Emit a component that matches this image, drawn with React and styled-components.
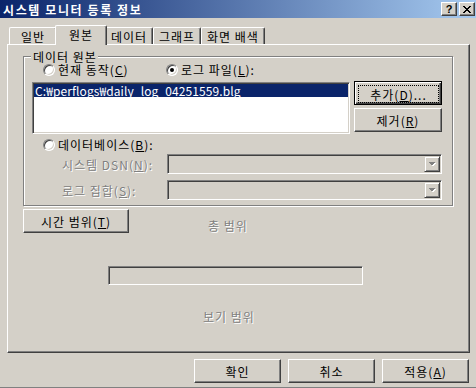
import React from "react";
import styled, { createGlobalStyle, css } from "styled-components";

const face = "#d4d0c8";
const shadow = "#808080";
const dark = "#404040";

const GlobalStyle = createGlobalStyle`
  html, body {
    margin: 0;
    padding: 0;
    background: ${face};
  }
  body {
    font-family: "Noto Sans CJK KR", "Noto Sans", sans-serif;
    font-size: 12px;
  }
  * {
    box-sizing: border-box;
  }
`;

const Window = styled.div`
  width: 476px;
  height: 388px;
  background: ${face};
  border-bottom: 1px solid ${shadow};
  display: flex;
  flex-direction: column;
  overflow: hidden;
  color: #000;
  font-size: 12px;
  line-height: 13px;
  letter-spacing: 1px;
`;

const TitleBar = styled.div`
  height: 18px;
  flex: none;
  display: flex;
  align-items: center;
  padding: 0 1px 0 3px;
  background: linear-gradient(to right, #0a246a, #a6caf0);
  color: #fff;
  font-weight: bold;
`;

const Title = styled.span`
  flex: 1;
  white-space: nowrap;
  letter-spacing: 1.6px;
`;

const CaptionButton = styled.div`
  width: 16px;
  height: 14px;
  margin-left: 2px;
  background: ${face};
  border: 1px solid;
  border-color: #fff ${dark} ${dark} #fff;
  box-shadow: inset -1px -1px 0 ${shadow};
  display: flex;
  align-items: center;
  justify-content: center;
  color: #000;
  font-family: "Liberation Sans", sans-serif;
  font-size: 11px;
  font-weight: bold;
  line-height: 11px;
  letter-spacing: 0;
`;

const Body = styled.div`
  flex: 1;
  display: flex;
  flex-direction: column;
  padding: 7px 6px 0 7px;
`;

const TabRow = styled.div`
  height: 20px;
  margin-bottom: -1px;
  padding-left: 2px;
  display: flex;
  align-items: flex-end;
  position: relative;
  z-index: 1;
`;

const Tab = styled.div`
  width: ${(p) => p.$w}px;
  height: 17px;
  margin-bottom: 1px;
  display: flex;
  align-items: center;
  justify-content: center;
  background: ${face};
  border-left: 1px solid #fff;
  border-top: 1px solid #fff;
  border-right: 1px solid ${dark};
  box-shadow: inset -1px 0 0 ${shadow};
  border-radius: 2px 2px 0 0;
  padding-top: 1px;
  white-space: nowrap;

  ${(p) =>
    p.$active &&
    css`
      width: ${p.$w + 4}px;
      height: 20px;
      margin: 0 -2px;
      padding-top: 0;
      padding-bottom: 2px;
      position: relative;
      z-index: 2;
    `}
`;

const Panel = styled.div`
  width: 463px;
  height: 309px;
  border-left: 1px solid #fff;
  border-top: 1px solid #fff;
  border-right: 1px solid ${dark};
  border-bottom: 1px solid ${dark};
  box-shadow: inset -1px -1px 0 ${shadow};
  padding-left: 15px;
  display: flex;
  flex-direction: column;
  align-items: flex-start;
`;

const GroupBox = styled.div`
  position: relative;
  width: 430px;
  margin-top: 11px;
  padding: 7px 0 5px;
  border: 1px solid ${shadow};
  box-shadow: inset 1px 1px 0 #fff, 1px 1px 0 #fff;
  display: flex;
  flex-direction: column;
`;

const GroupLabel = styled.span`
  position: absolute;
  top: -6px;
  left: 7px;
  padding: 0 1px 0 2px;
  line-height: 12px;
  background: ${face};
  white-space: nowrap;
`;

const RadioRow = styled.div`
  display: flex;
  align-items: center;
  height: 12px;
  margin-left: 19px;
  margin-top: ${(p) => p.$top || 0}px;
`;

const RadioOption = styled.label`
  display: flex;
  align-items: center;
  width: ${(p) => (p.$w ? `${p.$w}px` : "auto")};
  line-height: 12px;
  white-space: nowrap;
`;

const RadioCircle = styled.span`
  position: relative;
  flex: none;
  width: 12px;
  height: 12px;
  border-radius: 50%;
  background: #fff;
  border: 1px solid;
  border-color: ${shadow} #fff #fff ${shadow};
  box-shadow: inset 1px 1px 0 ${dark}, inset -1px -1px 0 ${face};
  margin-right: 3px;

  ${(p) =>
    p.$checked &&
    css`
      &::after {
        content: "";
        position: absolute;
        left: 3px;
        top: 3px;
        width: 4px;
        height: 4px;
        border-radius: 50%;
        background: #000;
      }
    `}
`;

const ListRow = styled.div`
  display: flex;
  align-items: flex-start;
  margin: 6px 0 0 8px;
`;

const ListBox = styled.div`
  width: 318px;
  height: 52px;
  background: #fff;
  border: 1px solid;
  border-color: ${shadow} #fff #fff ${shadow};
  box-shadow: inset 1px 1px 0 ${dark}, inset -1px -1px 0 ${face};
  padding: 1px;
`;

const ListItem = styled.div`
  height: 13px;
  padding-left: 1px;
  background: #0a246a;
  color: #fff;
  white-space: nowrap;
  letter-spacing: 0.1px;
`;

const ButtonCol = styled.div`
  display: flex;
  flex-direction: column;
  gap: 3px;
  margin: -1px 0 0 4px;
`;

const Button = styled.div`
  width: ${(p) => p.$w}px;
  height: ${(p) => p.$h || 24}px;
  flex: none;
  display: flex;
  align-items: center;
  justify-content: center;
  background: ${face};
  border: 1px solid;
  border-color: #fff ${dark} ${dark} #fff;
  box-shadow: inset -1px -1px 0 ${shadow};
  white-space: nowrap;

  ${(p) =>
    p.$default &&
    css`
      border-color: #000;
      box-shadow: inset 1px 1px 0 #fff, inset -1px -1px 0 ${dark},
        inset -2px -2px 0 ${shadow};
      padding: 3px 2px 1px 3px;
    `}
`;

const FocusRect = styled.span`
  flex: 1;
  align-self: stretch;
  display: flex;
  align-items: center;
  justify-content: center;
  border: 1px dotted #000;
`;

const Key = styled.u`
  text-decoration: underline;
  text-underline-offset: 1px;
`;

const ComboRow = styled.div`
  display: flex;
  align-items: center;
  margin: ${(p) => p.$top}px 0 0 38px;
`;

const DisabledText = styled.span`
  color: ${shadow};
  text-shadow: 1px 1px 0 #fff;
  white-space: nowrap;
`;

const ComboLabel = styled(DisabledText)`
  width: 105px;
`;

const Combo = styled.div`
  width: 275px;
  height: 20px;
  background: ${face};
  border: 1px solid;
  border-color: ${shadow} #fff #fff ${shadow};
  box-shadow: inset 1px 1px 0 ${dark}, inset -1px -1px 0 ${face};
  padding: 1px;
  display: flex;
  justify-content: flex-end;
`;

const ComboButton = styled.div`
  width: 16px;
  height: 16px;
  background: ${face};
  border: 1px solid;
  border-color: ${face} ${dark} ${dark} ${face};
  box-shadow: inset 1px 1px 0 #fff, inset -1px -1px 0 ${shadow};
  display: flex;
  align-items: center;
  justify-content: center;
`;

const TimeRow = styled.div`
  display: flex;
  align-items: flex-start;
  margin-top: 3px;
`;

const RangeLabel = styled(DisabledText)`
  margin: ${(p) => p.$top}px 0 0 ${(p) => p.$left}px;
`;

const RangeBox = styled.div`
  width: 255px;
  height: 19px;
  margin: 33px 0 0 85px;
  border: 1px solid;
  border-color: ${shadow} #fff #fff ${shadow};
  box-shadow: inset 1px 1px 0 ${dark};
`;

const Footer = styled.div`
  display: flex;
  justify-content: flex-end;
  gap: 7px;
  margin-top: 6px;
  padding-right: 1px;
`;

const closeRows = ["XX....XX", ".XX..XX.", "..XXXX..", "...XX...", "..XXXX..", ".XX..XX.", "XX....XX"];

function CloseIcon() {
  return (
    <svg width="8" height="7" viewBox="0 0 8 7" shapeRendering="crispEdges">
      {closeRows.map((row, y) =>
        row.split("").map((c, x) => (c === "X" ? <rect key={`${x}-${y}`} x={x} y={y} width="1" height="1" fill="#000" /> : null))
      )}
    </svg>
  );
}

function ArrowIcon() {
  return (
    <svg width="8" height="5" viewBox="0 0 8 5" shapeRendering="crispEdges">
      <polygon points="1,1 8,1 4.5,4.5" fill="#fff" />
      <polygon points="0,0 7,0 3.5,3.5" fill={shadow} />
    </svg>
  );
}

function Radio({ checked, w, children }) {
  return (
    <RadioOption $w={w}>
      <RadioCircle $checked={checked} />
      {children}
    </RadioOption>
  );
}

export default function App() {
  return (
    <>
      <GlobalStyle />
      <Window>
        <TitleBar>
          <Title>시스템 모니터 등록 정보</Title>
          <CaptionButton>?</CaptionButton>
          <CaptionButton>
            <CloseIcon />
          </CaptionButton>
        </TitleBar>
        <Body>
          <TabRow>
            <Tab $w={48}>일반</Tab>
            <Tab $w={48} $active>
              원본
            </Tab>
            <Tab $w={48}>데이터</Tab>
            <Tab $w={48}>그래프</Tab>
            <Tab $w={64}>화면 배색</Tab>
          </TabRow>
          <Panel>
            <GroupBox>
              <GroupLabel>데이터 원본</GroupLabel>
              <RadioRow>
                <Radio w={123}>
                  현재 동작(<Key>C</Key>)
                </Radio>
                <Radio checked>
                  로그 파일(<Key>L</Key>):
                </Radio>
              </RadioRow>
              <ListRow>
                <ListBox>
                  <ListItem>C:₩perflogs₩daily_log_04251559.blg</ListItem>
                </ListBox>
                <ButtonCol>
                  <Button $w={88} $default>
                    <FocusRect>
                      추가(<Key>D</Key>)...
                    </FocusRect>
                  </Button>
                  <Button $w={88}>
                    제거(<Key>R</Key>)
                  </Button>
                </ButtonCol>
              </ListRow>
              <RadioRow $top={5}>
                <Radio>
                  데이터베이스(<Key>B</Key>):
                </Radio>
              </RadioRow>
              <ComboRow $top={3}>
                <ComboLabel>
                  시스템 DSN(<Key>N</Key>):
                </ComboLabel>
                <Combo>
                  <ComboButton>
                    <ArrowIcon />
                  </ComboButton>
                </Combo>
              </ComboRow>
              <ComboRow $top={6}>
                <ComboLabel>
                  로그 집합(<Key>S</Key>):
                </ComboLabel>
                <Combo>
                  <ComboButton>
                    <ArrowIcon />
                  </ComboButton>
                </Combo>
              </ComboRow>
            </GroupBox>
            <TimeRow>
              <Button $w={106}>
                시간 범위(<Key>T</Key>)
              </Button>
              <RangeLabel $top={10} $left={79}>
                총 범위
              </RangeLabel>
            </TimeRow>
            <RangeBox />
            <RangeLabel $top={25} $left={180}>
              보기 범위
            </RangeLabel>
          </Panel>
          <Footer>
            <Button $w={87}>확인</Button>
            <Button $w={87}>취소</Button>
            <Button $w={87}>
              적용(<Key>A</Key>)
            </Button>
          </Footer>
        </Body>
      </Window>
    </>
  );
}
